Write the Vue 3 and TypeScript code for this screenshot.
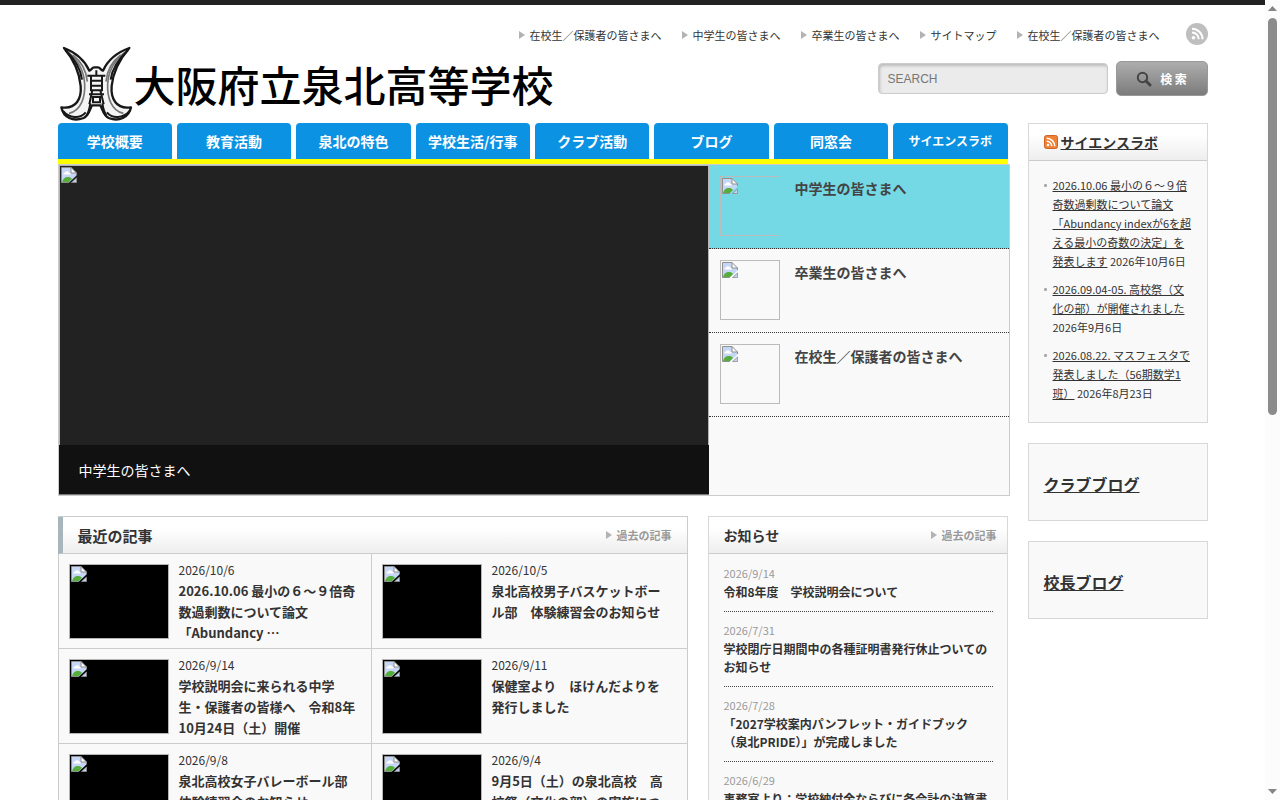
<script setup lang="ts">
import { defineComponent, h, ref } from 'vue'

interface Article {
  date: string
  title: string
}

const query = ref('')

const guideLinks: string[] = [
  '在校生／保護者の皆さまへ',
  '中学生の皆さまへ',
  '卒業生の皆さまへ',
  'サイトマップ',
  '在校生／保護者の皆さまへ',
]

const menu: string[] = ['学校概要', '教育活動', '泉北の特色', '学校生活/行事', 'クラブ活動', 'ブログ', '同窓会', 'サイエンスラボ']

const slides: string[] = ['中学生の皆さまへ', '卒業生の皆さまへ', '在校生／保護者の皆さまへ']
const activeSlide = ref(0)

const recent: Article[] = [
  { date: '2026/10/6', title: '2026.10.06 最小の６～９倍奇数過剰数について論文「Abundancy …' },
  { date: '2026/10/5', title: '泉北高校男子バスケットボール部　体験練習会のお知らせ' },
  { date: '2026/9/14', title: '学校説明会に来られる中学生・保護者の皆様へ　令和8年10月24日（土）開催' },
  { date: '2026/9/11', title: '保健室より　ほけんだよりを発行しました' },
  { date: '2026/9/8', title: '泉北高校女子バレーボール部　体験練習会のお知らせ' },
  { date: '2026/9/4', title: '9月5日（土）の泉北高校　高校祭（文化の部）の実施について' },
]

const news: Article[] = [
  { date: '2026/9/14', title: '令和8年度　学校説明会について' },
  { date: '2026/7/31', title: '学校閉庁日期間中の各種証明書発行休止ついてのお知らせ' },
  { date: '2026/7/28', title: '「2027学校案内パンフレット・ガイドブック（泉北PRIDE）」が完成しました' },
  { date: '2026/6/29', title: '事務室より：学校納付金ならびに各会計の決算書について' },
]

const feed: Article[] = [
  { date: '2026年10月6日', title: '2026.10.06 最小の６～９倍奇数過剰数について論文「Abundancy indexが6を超える最小の奇数の決定」を発表します' },
  { date: '2026年9月6日', title: '2026.09.04-05. 高校祭（文化の部）が開催されました' },
  { date: '2026年8月23日', title: '2026.08.22. マスフェスタで発表しました（56期数学1班）' },
]

const blogs: string[] = ['クラブブログ', '校長ブログ']

// Placeholder picture: a torn page with sky, cloud and hill.
const MissingPicture = defineComponent({
  setup: () => () =>
    h('svg', { width: 16, height: 16, viewBox: '0 0 16 16', 'aria-hidden': 'true' }, [
      h('path', { d: 'M.5.5H10L15.500 6v2.500L8 15.500H.5z', fill: '#c6d6f5' }),
      h('path', { d: 'M2.500 7.500a1.500 1.500 0 0 1 1.500-2 2.200 2.200 0 0 1 4 0A1.500 1.500 0 0 1 9.500 7.500z', fill: '#fff' }),
      h('path', { d: 'M1 15.500c.8-4 3.200-5.500 5.700-5.500 2 0 3.300.6 4.300 2L7.500 15.500z', fill: '#55ad3c' }),
      h('path', { d: 'M10 .5V6h5.500z', fill: '#fff' }),
      h('path', { d: 'M7.500 15.500H.5V.5H10L15.500 6v2M10 .5V6h5.500', fill: 'none', stroke: '#8f8f8f' }),
      h('path', { d: 'M15.500 11v4.500h-5z', fill: '#c6d6f5', stroke: '#8f8f8f', 'stroke-width': 0.8 }),
    ]),
})
</script>

<template>
  <div class="window" lang="ja">
    <div class="page">
      <div class="container">
        <header class="header">
          <div class="guide">
            <ul class="guide-links">
              <li v-for="(label, i) in guideLinks" :key="i"><a class="arrow" href="#">{{ label }}</a></li>
            </ul>
            <a class="feed-link" href="#" aria-label="RSS">
              <svg width="22" height="22" viewBox="0 0 22 22" aria-hidden="true">
                <circle cx="11" cy="11" r="11" fill="#bfbfbf" />
                <circle cx="7.500" cy="14.700" r="1.800" fill="#fff" />
                <path d="M6 9.500a6.700 6.700 0 0 1 6.700 6.700M6 5.700A10.500 10.500 0 0 1 16.500 16.200" fill="none" stroke="#fff" stroke-width="2" />
              </svg>
            </a>
          </div>
          <div class="masthead">
            <a class="brand" href="#">
              <svg class="emblem" viewBox="51 132 228 234" aria-hidden="true">
                <g fill="#f4f4f4" stroke="#171717" stroke-width="7" stroke-linejoin="round">
                  <path d="M69 141C105 155 130 176 145 209C151 208 152 199 160 199H171C178 199 179 208 186 209C200 178 226 155 265 141C240 170 216 212 212 255C209 291 224 326 270 319C264 350 233 363 203 351C186 343 184 322 178 313H153C147 322 145 343 128 351C96 363 67 350 61 319C107 326 122 291 119 255C115 212 95 172 69 141Z" />
                </g>
                <g fill="none" stroke="#777" stroke-width="5">
                  <path d="M79 151C111 177 129 206 131 249C133 288 120 330 84 337M255 151C221 177 202 206 200 249C198 288 211 330 247 337" />
                  <path d="M95 162C120 181 136 205 139 242M239 162C214 181 198 205 195 242" />
                </g>
                <g fill="none" stroke="#171717" stroke-width="6">
                  <path d="M73 147C100 173 119 202 123 236M261 147C234 173 213 202 209 236M66 330C85 353 118 354 134 334M266 330C247 353 213 354 198 334" />
                  <path d="M139 224H193M166 208V224M150 224V268H183V224M151 239H182M151 254H182M154 268L145 310M178 268L188 310M144 280H189" />
                  <path d="M156 288H177V304H156ZM148 307C145 326 143 334 137 342M184 307C187 326 190 334 196 342" />
                </g>
              </svg>
              <h1 class="school">大阪府立泉北高等学校</h1>
            </a>
            <form class="search" role="search" @submit.prevent>
              <input v-model="query" class="search-box" type="text" placeholder="SEARCH" aria-label="SEARCH" />
              <button class="search-button" type="submit">
                <svg width="16" height="16" viewBox="0 0 16 16" aria-hidden="true">
                  <circle cx="6.500" cy="6.500" r="4.700" fill="none" stroke="#444" stroke-width="2" />
                  <path d="M10 10L14 14" stroke="#444" stroke-width="3" stroke-linecap="round" />
                </svg>
                <span>検 索</span>
              </button>
            </form>
          </div>
        </header>

        <div class="columns">
          <main class="main">
            <nav class="menu">
              <a v-for="item in menu" :key="item" class="tab" href="#">{{ item }}</a>
            </nav>

            <section class="hero">
              <div class="stage">
                <div class="stage-picture"><MissingPicture /></div>
                <p class="caption">{{ slides[activeSlide] }}</p>
              </div>
              <ul class="slides">
                <li v-for="(slide, i) in slides" :key="slide">
                  <a class="slide" :class="{ active: i === activeSlide }" href="#" @click.prevent="activeSlide = i">
                    <span class="slide-picture"><MissingPicture /></span>
                    <span>{{ slide }}</span>
                  </a>
                </li>
              </ul>
            </section>

            <div class="boxes">
              <section class="box recent">
                <div class="box-head recent-head">
                  <h2>最近の記事</h2>
                  <a class="arrow more" href="#">過去の記事</a>
                </div>
                <ul class="cards">
                  <li v-for="item in recent" :key="item.title" class="card">
                    <a class="card-picture" href="#" :aria-label="item.title"><MissingPicture /></a>
                    <div class="card-text">
                      <p class="card-date">{{ item.date }}</p>
                      <a class="card-title" href="#">{{ item.title }}</a>
                    </div>
                  </li>
                </ul>
              </section>

              <section class="box">
                <div class="box-head news-head">
                  <h2>お知らせ</h2>
                  <a class="arrow more" href="#">過去の記事</a>
                </div>
                <ul class="news">
                  <li v-for="item in news" :key="item.title">
                    <p class="news-date">{{ item.date }}</p>
                    <a class="news-title" href="#">{{ item.title }}</a>
                  </li>
                </ul>
              </section>
            </div>
          </main>

          <aside class="side">
            <section class="box">
              <div class="box-head side-head">
                <svg width="14" height="14" viewBox="0 0 14 14" aria-hidden="true">
                  <rect x="0.500" y="0.500" width="13" height="13" rx="2" fill="#ee8133" stroke="#cf6424" />
                  <circle cx="4" cy="10" r="1.300" fill="#fff" />
                  <path d="M2.700 6.300a5 5 0 0 1 5 5M2.700 3.300a8 8 0 0 1 8 8" fill="none" stroke="#fff" stroke-width="1.500" />
                </svg>
                <h2><a href="#">サイエンスラボ</a></h2>
              </div>
              <ul class="feed">
                <li v-for="item in feed" :key="item.title">
                  <a href="#">{{ item.title }}</a> {{ item.date }}
                </li>
              </ul>
            </section>
            <section v-for="blog in blogs" :key="blog" class="box blog">
              <h2><a href="#">{{ blog }}</a></h2>
            </section>
          </aside>
        </div>
      </div>
    </div>

    <div class="scrollbar" aria-hidden="true">
      <svg width="9" height="5" viewBox="0 0 9 5"><path d="M0 5L4.500 0L9 5z" fill="#858585" /></svg>
      <div class="track"><div class="thumb"></div></div>
      <svg width="9" height="5" viewBox="0 0 9 5"><path d="M0 0L4.500 5L9 0z" fill="#858585" /></svg>
    </div>
  </div>
</template>

<style>
html,
body {
  margin: 0;
  background: #fff;
}
</style>

<style scoped>
.window {
  display: flex;
  height: 100vh;
  overflow: hidden;
  color: #333;
  font-family: "Noto Sans CJK JP", sans-serif;
  font-size: 11px;
}
.window * {
  box-sizing: border-box;
}
.page {
  flex: 1;
  min-width: 0;
  overflow: hidden;
  border-top: 5px solid #222;
}
.container {
  max-width: 1150px;
  margin: 0 auto;
}
ul,
p,
h1,
h2 {
  margin: 0;
  padding: 0;
  list-style: none;
}
a {
  color: inherit;
  text-decoration: none;
}
svg {
  display: block;
  flex: none;
}

.header {
  padding-top: 18px;
}
.masthead {
  display: flex;
  align-items: flex-start;
  justify-content: space-between;
}
.brand {
  display: flex;
  align-items: center;
}
.emblem {
  width: 76px;
  height: 78px;
}
.school {
  color: #000;
  font-size: 42px;
  font-weight: 500;
  line-height: 78px;
  white-space: nowrap;
}
.guide {
  display: flex;
  justify-content: flex-end;
  gap: 26px;
  height: 22px;
}
.guide-links {
  display: flex;
  gap: 20px;
  line-height: 24px;
  white-space: nowrap;
}
.arrow {
  display: flex;
  align-items: center;
  gap: 5px;
}
.arrow::before {
  content: "";
  border-left: 6px solid #b3b3b3;
  border-top: 4px solid transparent;
  border-bottom: 4px solid transparent;
}
.search {
  display: flex;
  align-items: center;
  gap: 8px;
  padding-top: 16px;
}
.search-box {
  width: 230px;
  height: 31px;
  padding: 0 9px;
  border: 1px solid #ccc;
  border-radius: 4px;
  background: #ebebeb;
  box-shadow: inset 1px 2px 3px #bbb;
  color: #333;
  font: 12px "Liberation Sans", sans-serif;
}
.search-box::placeholder {
  color: #777;
}
.search-button {
  display: flex;
  align-items: center;
  justify-content: center;
  gap: 8px;
  width: 92px;
  height: 35px;
  padding: 0;
  border: 1px solid #999;
  border-radius: 5px;
  background: linear-gradient(#adadad, #7c7c7c);
  color: #fff;
  font: bold 12px "Noto Sans CJK JP", sans-serif;
}

.columns {
  display: grid;
  grid-template-columns: minmax(0, 1fr) 180px;
  align-items: start;
  gap: 20px;
}
.menu {
  display: grid;
  grid-template-columns: repeat(8, minmax(0, 1fr));
  gap: 5px;
  border-bottom: 5px solid #ff0;
}
.tab {
  border-radius: 4px 4px 0 0;
  background: #0c92e2;
  color: #fff;
  font-size: 14px;
  font-weight: bold;
  line-height: 36px;
  text-align: center;
  white-space: nowrap;
}
.tab:last-child {
  font-size: 12px;
}

.hero {
  display: grid;
  grid-template-columns: minmax(0, 1fr) 300px;
  margin-right: -2px;
  border: 1px solid #ccc;
  background: #f9f9f9;
}
.stage {
  display: flex;
  flex-direction: column;
  min-height: 330px;
  background: #222;
}
.stage-picture {
  flex: 1;
  padding: 1px;
  border: 1px solid #b5b5b5;
  border-bottom: 0;
}
.caption {
  padding: 1px 20px 0;
  border-bottom: 1px solid #777;
  background: #111;
  color: #fff;
  font-size: 14px;
  line-height: 48px;
}
.slide {
  display: flex;
  gap: 15px;
  padding: 11px 11px 12px;
  border-bottom: 1px dotted #333;
  color: #444;
  font-size: 14px;
  font-weight: bold;
  line-height: 24px;
}
.slide.active {
  background: #74d9e5;
}
.slide-picture {
  width: 60px;
  height: 60px;
  padding: 1px;
  border: 1px solid #bbb;
}

.boxes {
  display: grid;
  grid-template-columns: minmax(0, 1fr) 300px;
  gap: 20px;
  margin-top: 20px;
}
.box {
  border: 1px solid #d8d8d8;
  background: #f9f9f9;
}
.box-head {
  display: flex;
  align-items: center;
  justify-content: space-between;
  height: 37px;
  border-bottom: 1px solid #ccc;
  background: linear-gradient(#fff 30%, #eee);
}
.box-head h2 {
  font-size: 14px;
}
.recent {
  border-color: #ccc;
}
.recent-head {
  margin-left: -1px;
  padding: 0 15px;
  border-left: 5px solid #a9b5bd;
}
.box-head.recent-head h2 {
  font-size: 15px;
}
.more {
  color: #999;
  font-weight: bold;
}
.cards {
  display: grid;
  grid-template-columns: 313px minmax(0, 1fr);
}
.card {
  display: flex;
  gap: 10px;
  height: 95px;
  padding: 0 20px 0 10px;
  border-bottom: 1px solid #ccc;
}
.card:nth-child(odd) {
  padding-right: 12px;
  border-right: 1px solid #ccc;
}
.card-picture {
  flex: none;
  width: 100px;
  height: 75px;
  margin-top: 10px;
  padding: 1px;
  border: 1px solid #b5b5b5;
  background: #000;
}
.card-text {
  padding-top: 5px;
  line-height: 21px;
}
.card-date {
  font-size: 12px;
}
.card-title {
  display: block;
  font-size: 13px;
  font-weight: bold;
}
.news-head {
  padding: 0 10px 0 15px;
}
.news {
  display: grid;
  gap: 8px;
  padding: 9px 14px 10px 15px;
}
.news li {
  padding-bottom: 10px;
  border-bottom: 1px dotted #444;
}
.news-date {
  color: #999;
  line-height: 20px;
}
.news-title {
  display: block;
  padding-right: 4px;
  font-size: 12px;
  font-weight: bold;
  line-height: 18px;
}

.side {
  display: grid;
  gap: 20px;
}
.side a {
  text-decoration: underline;
}
.side-head {
  justify-content: flex-start;
  gap: 3px;
  padding: 0 15px;
}
.feed {
  display: grid;
  gap: 9px;
  padding: 15px 15px 19px;
  line-height: 19px;
}
.feed li {
  position: relative;
  padding-left: 9px;
}
.feed li::before {
  content: "";
  position: absolute;
  top: 8px;
  left: 0;
  width: 3px;
  height: 3px;
  border-radius: 1px;
  background: #aaa;
}
.blog {
  padding: 28px 15px 24px;
}
.blog h2 {
  font-size: 16px;
  line-height: 24px;
}

.scrollbar {
  display: flex;
  flex-direction: column;
  align-items: center;
  gap: 7px;
  width: 15px;
  padding: 6px 0;
  background: #fcfcfc;
}
.track {
  flex: 1;
}
.thumb {
  width: 9px;
  height: 52%;
  border-radius: 5px;
  background: #8b8b8b;
}
</style>
